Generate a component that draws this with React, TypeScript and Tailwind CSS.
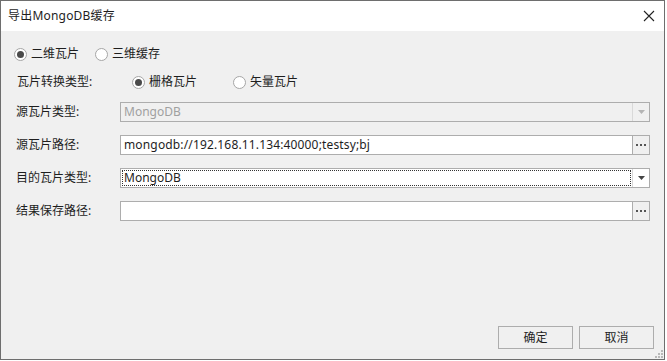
import React from 'react';

const font = { fontFamily: '"Noto Sans", "Noto Sans CJK SC", sans-serif' };

function Radio({ checked, label }: { checked?: boolean; label: string }) {
  return (
    <div className="flex items-center h-[20px]">
      <span className="w-[13px] h-[13px] rounded-full border border-[#a6a6a6] bg-white flex items-center justify-center">
        {checked && <span className="w-[7px] h-[7px] rounded-full bg-[#4a4a4a]" />}
      </span>
      <span className="ml-[4px] text-[12px] leading-[20px]">{label}</span>
    </div>
  );
}

function DotsButton() {
  return (
    <div className="w-[17px] h-full border-l border-[#adadad] bg-[#f0f0f0] flex items-center justify-center gap-[2px]">
      <span className="w-[2px] h-[2px] bg-[#555]" />
      <span className="w-[2px] h-[2px] bg-[#555]" />
      <span className="w-[2px] h-[2px] bg-[#555]" />
    </div>
  );
}

function Arrow({ disabled }: { disabled?: boolean }) {
  return (
    <div className="w-[17px] h-full border-l border-[#d9d9d9] flex items-center justify-center">
      <svg width="7" height="4" viewBox="0 0 7 4">
        <path d="M0 0 H7 L3.5 4 Z" fill={disabled ? '#b4b4b4' : '#444'} />
      </svg>
    </div>
  );
}

function Row({ label, children, mt }: { label: string; children: React.ReactNode; mt: string }) {
  return (
    <div className={`flex items-center h-[20px] ${mt}`}>
      <div className="w-[106px] text-[12px] leading-[20px] pl-[2px]">{label}</div>
      <div className="w-[530px] h-[20px]">{children}</div>
    </div>
  );
}

export default function App() {
  return (
    <div className="w-[667px] h-[361px] bg-white text-[#1e1e1e]" style={font}>
      <div className="w-[665px] h-[360px] border border-[#6e6e6e] flex flex-col">
        {/* Title bar */}
        <div className="h-[30px] bg-white flex items-center justify-between pl-[7px] pr-[7px]">
          <span className="text-[12px] tracking-[0.2px]">导出MongoDB缓存</span>
          <svg width="12" height="12" viewBox="0 0 12 12" className="mr-[2px]">
            <path d="M1 1 L11 11 M11 1 L1 11" stroke="#222" strokeWidth="1.1" />
          </svg>
        </div>

        <div className="flex-1 bg-[#f0f0f0] relative pl-[13px] flex flex-col">
          <div className="flex items-center mt-[13px] gap-[16px]">
            <Radio checked label="二维瓦片" />
            <Radio label="三维缓存" />
          </div>

          <div className="flex items-center mt-[8px]">
            <div className="w-[118px] text-[12px] leading-[20px] pl-[3px]">瓦片转换类型:</div>
            <Radio checked label="栅格瓦片" />
            <div className="w-[36px]" />
            <Radio label="矢量瓦片" />
          </div>

          <Row label="源瓦片类型:" mt="mt-[10px]">
            <div className="flex h-full border border-[#adadad] bg-[#f0f0f0]">
              <div className="flex-1 pl-[3px] text-[12px] leading-[18px] text-[#a0a0a0]">MongoDB</div>
              <Arrow disabled />
            </div>
          </Row>

          <Row label="源瓦片路径:" mt="mt-[13px]">
            <div className="flex h-full border border-[#adadad] bg-white">
              <div className="flex-1 pl-[3px] text-[12px] leading-[18px] tracking-[0.15px]">mongodb://192.168.11.134:40000;testsy;bj</div>
              <DotsButton />
            </div>
          </Row>

          <Row label="目的瓦片类型:" mt="mt-[13px]">
            <div className="flex h-full border border-[#adadad] bg-white">
              <div className="flex-1 p-[1px]">
                <div className="h-full border border-dotted border-[#333] pl-[1px] text-[12px] leading-[14px]">MongoDB</div>
              </div>
              <Arrow />
            </div>
          </Row>

          <Row label="结果保存路径:" mt="mt-[13px]">
            <div className="flex h-full border border-[#adadad] bg-white">
              <div className="flex-1" />
              <DotsButton />
            </div>
          </Row>

          <div className="flex-1" />

          <div className="flex justify-end gap-[6px] pr-[10px] mb-[10px]">
            <button className="w-[75px] h-[23px] border border-[#adadad] bg-[#f0f0f0] text-[12px]">确定</button>
            <button className="w-[75px] h-[23px] border border-[#adadad] bg-[#f0f0f0] text-[12px]">取消</button>
          </div>

          <svg width="8" height="8" viewBox="0 0 8 8" className="absolute right-[1px] bottom-[1px]">
            <rect x="6" y="0" width="2" height="2" fill="#b8b8b8" />
            <rect x="3" y="3" width="2" height="2" fill="#b8b8b8" />
            <rect x="6" y="3" width="2" height="2" fill="#b8b8b8" />
            <rect x="0" y="6" width="2" height="2" fill="#b8b8b8" />
            <rect x="3" y="6" width="2" height="2" fill="#b8b8b8" />
            <rect x="6" y="6" width="2" height="2" fill="#b8b8b8" />
          </svg>
        </div>
      </div>
    </div>
  );
}
